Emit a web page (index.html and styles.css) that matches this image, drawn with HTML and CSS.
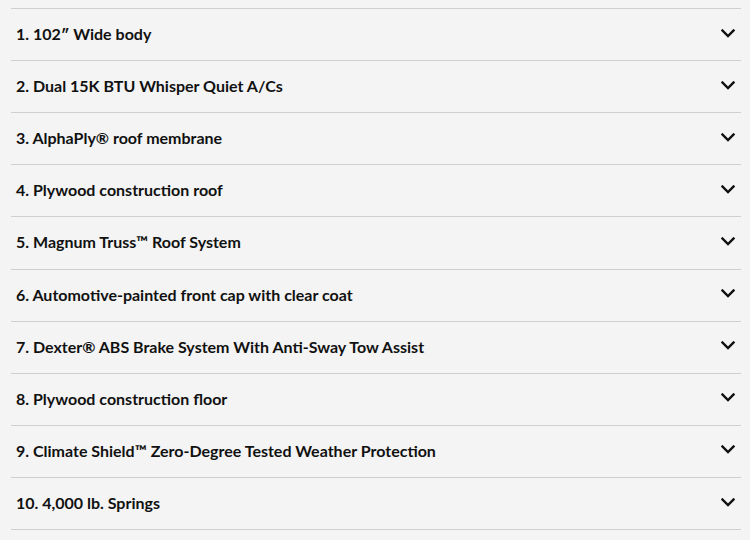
FILE: index.html
```html
<!DOCTYPE html>
<html>
<head>
<meta charset="utf-8">
<link rel="stylesheet" href="styles.css">
</head>
<body>
<div class="list">
  <div class="item"><span class="title">1. 102″ Wide body</span><svg class="chev" viewBox="0 0 14 9"><path d="M1.5 1.5 L7 7 L12.5 1.5"/></svg></div>
  <div class="item"><span class="title">2. Dual 15K BTU Whisper Quiet A/Cs</span><svg class="chev" viewBox="0 0 14 9"><path d="M1.5 1.5 L7 7 L12.5 1.5"/></svg></div>
  <div class="item"><span class="title">3. AlphaPly® roof membrane</span><svg class="chev" viewBox="0 0 14 9"><path d="M1.5 1.5 L7 7 L12.5 1.5"/></svg></div>
  <div class="item"><span class="title">4. Plywood construction roof</span><svg class="chev" viewBox="0 0 14 9"><path d="M1.5 1.5 L7 7 L12.5 1.5"/></svg></div>
  <div class="item"><span class="title">5. Magnum Truss™ Roof System</span><svg class="chev" viewBox="0 0 14 9"><path d="M1.5 1.5 L7 7 L12.5 1.5"/></svg></div>
  <div class="item"><span class="title">6. Automotive-painted front cap with clear coat</span><svg class="chev" viewBox="0 0 14 9"><path d="M1.5 1.5 L7 7 L12.5 1.5"/></svg></div>
  <div class="item"><span class="title">7. Dexter® ABS Brake System With Anti-Sway Tow Assist</span><svg class="chev" viewBox="0 0 14 9"><path d="M1.5 1.5 L7 7 L12.5 1.5"/></svg></div>
  <div class="item"><span class="title">8. Plywood construction floor</span><svg class="chev" viewBox="0 0 14 9"><path d="M1.5 1.5 L7 7 L12.5 1.5"/></svg></div>
  <div class="item"><span class="title">9. Climate Shield™ Zero-Degree Tested Weather Protection</span><svg class="chev" viewBox="0 0 14 9"><path d="M1.5 1.5 L7 7 L12.5 1.5"/></svg></div>
  <div class="item"><span class="title">10. 4,000 lb. Springs</span><svg class="chev" viewBox="0 0 14 9"><path d="M1.5 1.5 L7 7 L12.5 1.5"/></svg></div>
</div>
</body>
</html>
```
FILE: styles.css
```css
html, body {
  margin: 0;
  padding: 0;
  background: #f4f4f4;
}
body {
  padding: 8px 9px 0 11px;
  font-family: Lato, "Liberation Sans", sans-serif;
}
.list {
  border-top: 1px solid #cfcfcf;
}
.item {
  display: flex;
  align-items: center;
  justify-content: space-between;
  height: 51.12px;
  border-bottom: 1px solid #cfcfcf;
  padding: 0 6px 0 5px;
}
.title {
  font-size: 16px;
  font-weight: 700;
  color: #111;
  padding-bottom: 2px;
}
.chev {
  width: 14px;
  height: 9px;
  margin-bottom: 3px;
}
.chev path {
  fill: none;
  stroke: #111;
  stroke-width: 2.4;
  stroke-linecap: square;
  stroke-linejoin: miter;
}
```
